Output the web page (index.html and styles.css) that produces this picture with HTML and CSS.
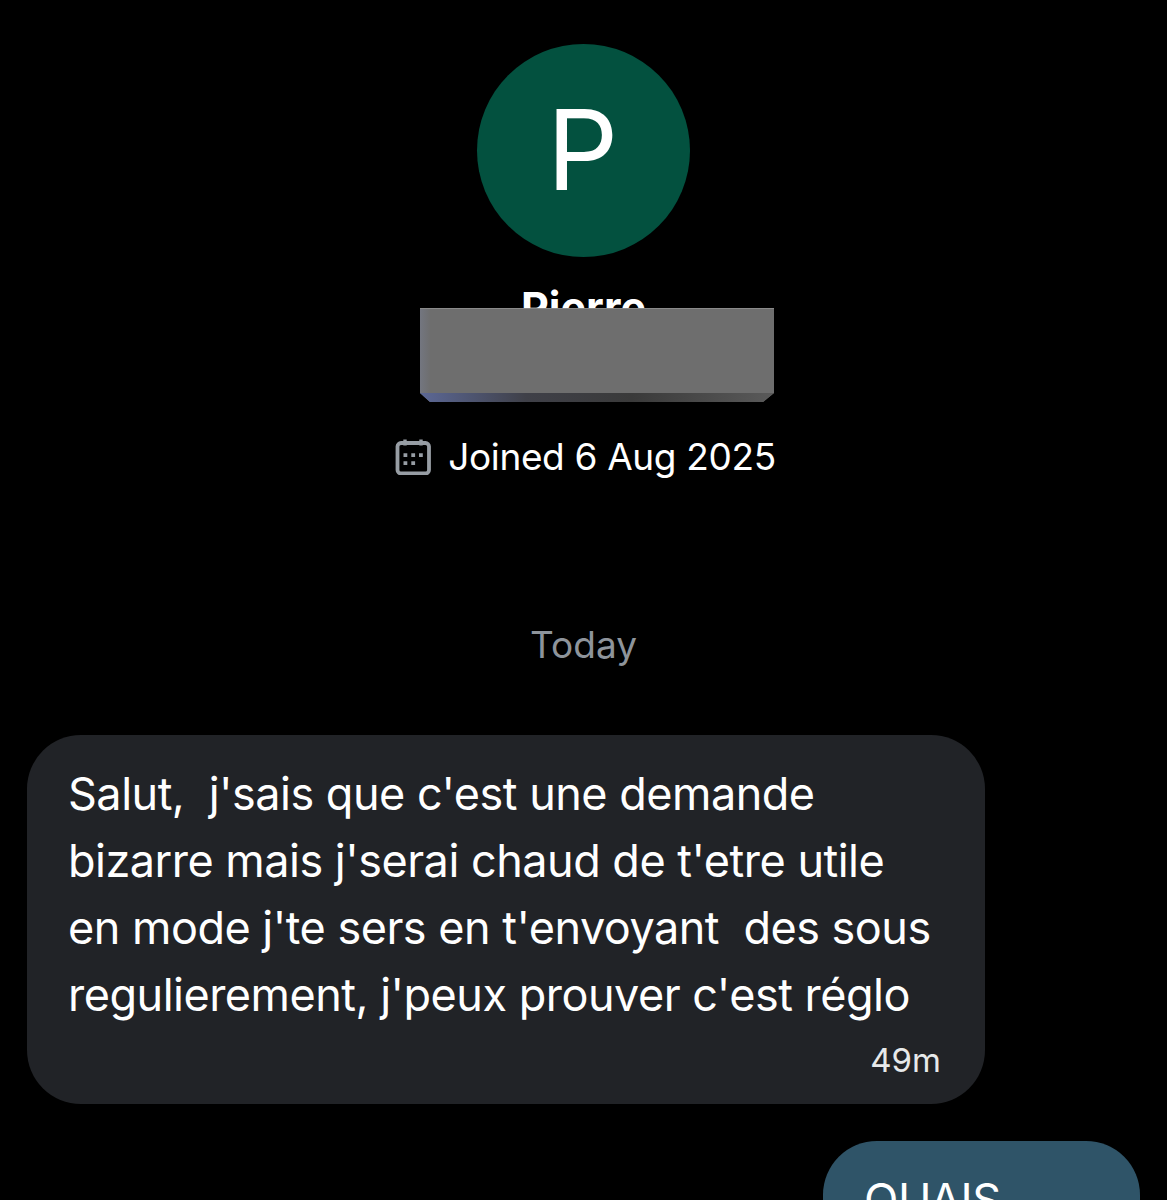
FILE: index.html
```html
<!DOCTYPE html>
<html lang="en">
<head>
    <meta charset="UTF-8">
    <meta name="viewport" content="width=device-width, initial-scale=1.0">
    <title>Messages</title>
    <link rel="stylesheet" href="styles.css">
</head>
<body>

    <!-- ======= Profile ======= -->
    <header class="profile">
        <div class="avatar">P</div>
        <div class="name-block">
            <h2 class="name">Pierre</h2>
            <div class="censor"></div>
        </div>
        <p class="joined">
            <svg class="cal-icon" viewBox="0 0 36 36" width="36" height="36" fill="none" aria-hidden="true">
                <rect x="2.500" y="4" width="31.500" height="30.500" rx="3.500" stroke="#979da4" stroke-width="3.800"/>
                <path d="M10 0.500v6M26 0.500v6" stroke="#979da4" stroke-width="3.400"/>
                <path d="M8.500 14.300h3.800v3.800H8.500zM16.300 14.300h3.800v3.800h-3.800zM24 14.300h3.800v3.800H24zM8.500 22.300h3.800v3.800H8.500zM16.300 22.300h3.800v3.800h-3.800z" fill="#979da4"/>
            </svg>
            <span>Joined 6 Aug 2025</span>
        </p>
    </header>

    <!-- ======= Conversation ======= -->
    <main class="thread">
        <div class="day">Today</div>

        <div class="bubble bubble-in">
            <p class="line">Salut,&nbsp; j'sais que c'est une demande</p>
            <p class="line">bizarre mais j'serai chaud de t'etre utile</p>
            <p class="line">en mode j'te sers en t'envoyant&nbsp; des sous</p>
            <p class="line">regulierement, j'peux prouver c'est réglo</p>
            <div class="time">49m</div>
        </div>

        <div class="bubble bubble-out">
            <p class="line">OUAIS</p>
        </div>
    </main>
</body>
</html>
```

FILE: styles.css
```css
html, body {
    height: 1200px;
    overflow: hidden;
}

body {
    margin: 0;
    background-color: #000;
    color: #fff;
    font-family: Inter, "Liberation Sans", sans-serif;
}

.profile {
    display: flex;
    flex-direction: column;
    align-items: center;
    padding-top: 44px;
}

.avatar {
    box-sizing: border-box;
    width: 213px;
    height: 213px;
    padding: 0 2px 3px 0;
    border-radius: 50%;
    background-color: #03513f;
    display: flex;
    align-items: center;
    justify-content: center;
    font-size: 112px;
    line-height: 1;
}

.name-block {
    position: relative;
    height: 145px;
    width: 100%;
    text-align: center;
}

.name {
    margin: 26px 0 0;
    font-size: 43px;
    line-height: 48px;
    font-weight: 700;
}

/* grey block over the handle, with a bevelled lower edge */
.censor {
    position: absolute;
    left: 420px;
    top: 51px;
    width: 354px;
    height: 94px;
    background:
        linear-gradient(90deg, #5c6896, #3f4048 30%, #3a3a3a 60%, #5a5a5a) bottom / 100% 9px no-repeat,
        linear-gradient(#8a8a8a, #8a8a8a) top / 100% 1px no-repeat,
        linear-gradient(90deg, #737680, #6e6e6e 3%, #6e6e6e);
    clip-path: polygon(0 0, 100% 0, 100% 85px, 343px 100%, 10px 100%, 0 85px);
}

.joined {
    margin: 31px 0 0 4px;
    display: flex;
    align-items: center;
    gap: 17px;
    font-size: 37px;
    letter-spacing: -0.35px;
    line-height: 48px;
}

.cal-icon {
    flex: none;
}

.thread {
    display: flex;
    flex-direction: column;
    padding: 0 27px;
}

.day {
    margin-top: 140px;
    text-align: center;
    color: #8e949b;
    font-size: 37px;
    line-height: 48px;
}

.bubble {
    box-sizing: border-box;
    border-radius: 54px;
}

.bubble-in {
    margin-top: 66px;
    width: 958px;
    height: 369px;
    padding: 25px 44px 0 41px;
    background-color: #212327;
}

.bubble-out {
    align-self: flex-end;
    margin-top: 37px;
    width: 317px;
    height: 160px;
    padding: 25px 41px 0;
    background-color: #2f5468;
}

.line {
    margin: 0;
    font-size: 45px;
    letter-spacing: -0.5px;
    line-height: 67px;
    white-space: nowrap;
}

.time {
    margin-top: 12px;
    text-align: right;
    font-size: 33px;
    line-height: 40px;
    color: #e7e9ea;
}
```
